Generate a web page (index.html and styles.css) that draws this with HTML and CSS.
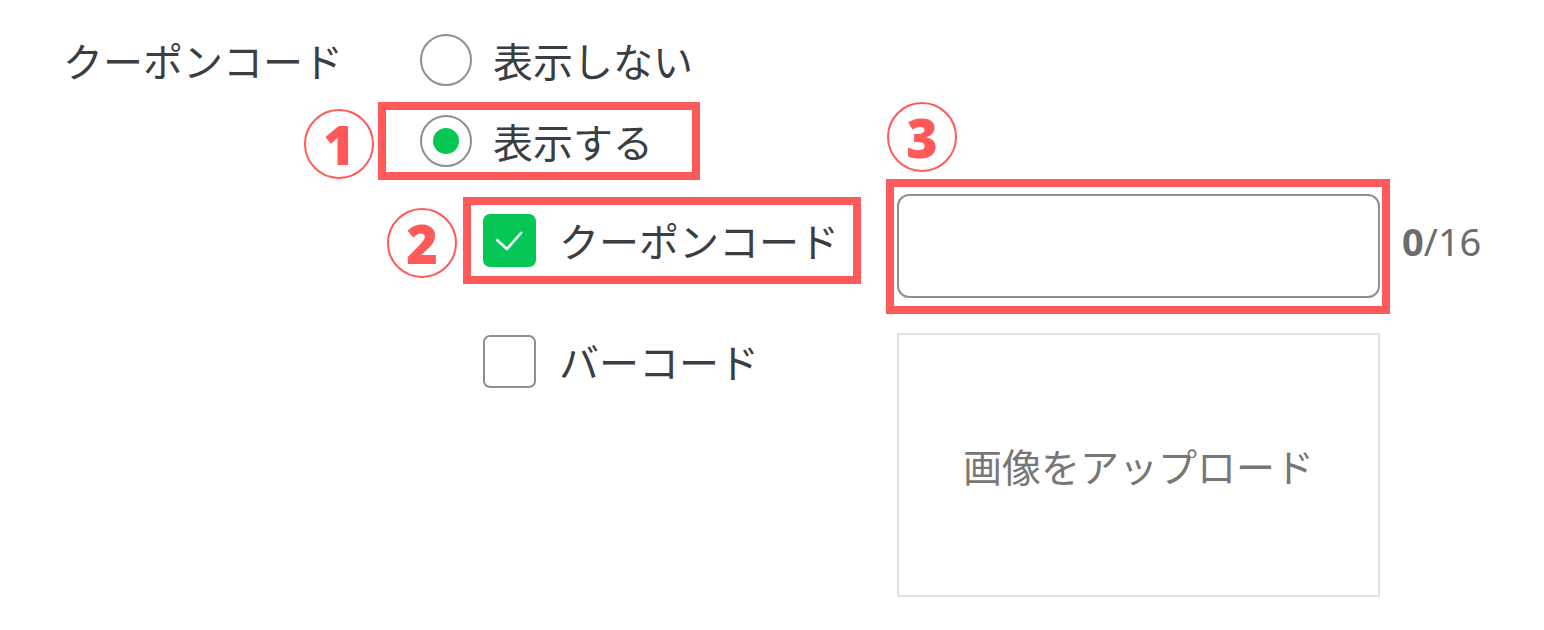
FILE: index.html
```html
<!DOCTYPE html>
<html lang="ja">
<head>
<meta charset="UTF-8">
<meta name="viewport" content="width=device-width, initial-scale=1.0">
<title>クーポンコード設定</title>
<link rel="stylesheet" href="styles.css">
</head>
<body>
<div class="field">
  <div class="field-label">クーポンコード</div>
  <div class="field-body">
    <label class="radio-row">
      <span class="radio"></span>
      <span>表示しない</span>
    </label>
    <label class="radio-row marked">
      <span class="badge badge-1">1</span>
      <span class="radio checked"></span>
      <span>表示する</span>
    </label>

    <div class="sub">
      <div class="checks">
        <label class="check-row marked">
          <span class="badge badge-2">2</span>
          <span class="checkbox checked">
            <svg width="53" height="53" viewBox="0 0 53 53"><polyline points="14,26 24,35 38,19" fill="none" stroke="#fff" stroke-width="2.6" stroke-linecap="round" stroke-linejoin="round"/></svg>
          </span>
          <span>クーポンコード</span>
        </label>
        <label class="check-row">
          <span class="checkbox"></span>
          <span>バーコード</span>
        </label>
      </div>

      <div class="media">
        <div class="code-row">
          <div class="input-wrap marked">
            <span class="badge badge-3">3</span>
            <input type="text" class="code-input">
          </div>
          <div class="counter"><b>0</b>/16</div>
        </div>
        <div class="upload">画像をアップロード</div>
      </div>
    </div>
  </div>
</div>
</body>
</html>
```

FILE: styles.css
```css
body {
  margin: 0;
  background: #fff;
  color: #3a3d42;
  font-family: "Noto Sans CJK JP", "Noto Sans", sans-serif;
}
.field {
  display: flex;
  padding: 35px 0 0 63px;
}
.field-label {
  width: 357px;
  font-size: 40px;
  line-height: 50px;
}
.field-body {
  display: flex;
  flex-direction: column;
  align-items: flex-start;
  gap: 31px;
}
.radio-row {
  position: relative;
  display: flex;
  align-items: center;
  gap: 21px;
  height: 50px;
  font-size: 40px;
  line-height: 50px;
}
.radio {
  width: 52px;
  height: 52px;
  box-sizing: border-box;
  border: 2.5px solid #8f8f8f;
  border-radius: 50%;
  display: flex;
  align-items: center;
  justify-content: center;
}
.radio.checked::after {
  content: "";
  width: 26px;
  height: 26px;
  border-radius: 50%;
  background: #06c755;
}

/* red annotation frames */
.marked::after {
  content: "";
  position: absolute;
  border: 8px solid #ff5959;
  pointer-events: none;
}
.radio-row.marked::after {
  inset: -14px -47px -14px -42px;
}
.check-row.marked::after {
  inset: -17px -22px -17px -20px;
}
.input-wrap.marked::after {
  inset: -15px -10px -16px -11px;
}
.badge {
  position: absolute;
  width: 70px;
  height: 70px;
  box-sizing: border-box;
  border: 2.5px solid #ff5959;
  border-radius: 50%;
  display: flex;
  align-items: center;
  justify-content: center;
  color: #ff5959;
  font-family: "Open Sans", "Noto Sans", sans-serif;
  font-weight: 800;
  font-size: 54px;
  line-height: 1;
}
.badge-1 { left: -116px; top: -7px; }
.badge-2 { left: -96px; top: -6px; }
.badge-3 { left: -10px; top: -92px; }

.sub {
  display: flex;
  margin-top: -3px;
  margin-left: 63px;
}
.checks {
  width: 414px;
  padding-top: 20px;
  display: flex;
  flex-direction: column;
  gap: 68px;
}
.check-row {
  position: relative;
  display: flex;
  align-items: center;
  gap: 23px;
  align-self: flex-start;
  height: 53px;
  font-size: 40px;
  line-height: 53px;
}
.checkbox {
  width: 53px;
  height: 53px;
  box-sizing: border-box;
  border: 2.5px solid #8f8f8f;
  border-radius: 7px;
}
.checkbox.checked {
  border: none;
  background: #06c755;
}
.checkbox svg {
  display: block;
}
.media {
  display: flex;
  flex-direction: column;
  gap: 35px;
}
.code-row {
  display: flex;
  align-items: center;
  gap: 22px;
}
.input-wrap {
  position: relative;
}
.code-input {
  display: block;
  width: 483px;
  height: 104px;
  box-sizing: border-box;
  border: 2.5px solid #8f8f8f;
  border-radius: 12px;
  margin: 0;
  padding: 0 20px;
  font-size: 36px;
  outline: none;
}
.counter {
  margin-bottom: 10px;
  color: #6c6c6c;
  font-family: "Noto Sans", sans-serif;
  font-size: 38px;
}
.counter b {
  font-weight: 700;
}
.upload {
  width: 483px;
  height: 264px;
  box-sizing: border-box;
  border: 2px solid #dfe2e7;
  display: flex;
  align-items: center;
  justify-content: center;
  color: #777;
  font-size: 39px;
}
```
